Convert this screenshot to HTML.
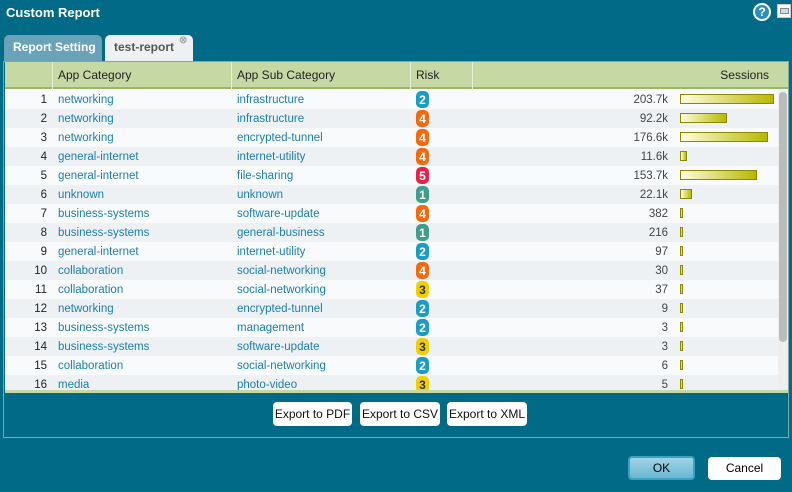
<!DOCTYPE html>
<html><head><style>
*{margin:0;padding:0;box-sizing:border-box}
body{width:792px;height:492px;background:#016a87;font-family:"Liberation Sans",sans-serif;position:relative;overflow:hidden}
.title{position:absolute;left:6px;top:5px;color:#fff;font-weight:bold;font-size:13px}
.help{position:absolute;left:753px;top:3px;width:18px;height:18px;border-radius:50%;background:#2a8fc0;border:2px solid #fff;color:#fff;font-size:12px;font-weight:bold;text-align:center;line-height:14px}
.max{position:absolute;left:777px;top:4px;width:14px;height:14px;background:#fff;border:1px solid #ccc}
.max i{position:absolute;left:2px;top:3px;width:9px;height:6px;background:#cfd8e0;border:1px solid #889}
.tab{position:absolute;top:35px;height:26px;border-radius:5px 5px 0 0;font-weight:bold;font-size:12px;line-height:24px;padding-left:9px}
.t1{left:4px;width:98px;background:#6aa3b8;color:#fff}
.t2{left:105px;width:88px;background:#eef1f3;color:#555}
.panel{position:absolute;left:3px;top:61px;width:786px;height:377px;border:1px solid #7aa;}
.grid{position:absolute;left:5px;top:62px;width:783px;height:331px;background:#f8fafc;overflow:hidden}
.hdr{position:absolute;left:0;top:0;width:783px;height:27px;background:#c6d8a4;border-bottom:2px solid #9ab86a;font-size:12px;color:#222}
.hdr div{position:absolute;top:0;height:27px;line-height:27px;border-left:1px solid #e6eed8}
.row{position:absolute;left:0;width:773px;height:19px;font-size:11.5px;line-height:21px}
.row span{position:absolute;top:0}
.n{width:42px;text-align:right;color:#222}
.c{color:#1a7fb0}
.rk{width:13px;height:17px;top:1px!important;border-radius:5px;color:#fff;font-weight:bold;text-align:center;line-height:18px;font-size:12px}
.s{width:160px;text-align:right;color:#444;left:503px}
.bar{height:10px;top:4px!important;border:1px solid #8a8a00;background:linear-gradient(90deg,#fefee0,#b8b800)}
.vl{position:absolute;top:27px;width:1px;height:304px;background:#dde2e6}
.sb{position:absolute;left:773px;top:27px;width:10px;height:304px;background:#eee}
.sb i{position:absolute;left:1px;top:3px;width:8px;height:250px;background:#bbb;border-radius:4px}
.foot{position:absolute;left:5px;top:390px;width:783px;height:3px;background:#c6d8a4}
.btn{position:absolute;top:402px;height:24px;background:#fff;border-radius:4px;font-size:12px;text-align:center;line-height:24px;color:#111}
.ok{position:absolute;left:628px;top:456px;width:67px;height:24px;border-radius:4px;background:linear-gradient(#9fd4e6,#6bb6d0);border:2px solid #3aa0c4;text-align:center;line-height:20px;font-size:12px}
.cn{position:absolute;left:708px;top:457px;width:73px;height:23px;border-radius:4px;background:#fff;text-align:center;line-height:23px;font-size:12px}
</style></head><body>
<div class="title">Custom Report</div>
<div class="help">?</div><div class="max"><i></i></div>
<div class="tab t1">Report Setting</div>
<div class="tab t2">test-report <span style="position:absolute;left:74px;top:-6px;color:#aaa;font-size:10px">⊗</span></div>
<div class="panel"></div>
<div class="grid">
<div class="hdr">
<div style="left:47px;width:179px;padding-left:5px">App Category</div>
<div style="left:226px;width:179px;padding-left:5px">App Sub Category</div>
<div style="left:405px;width:62px;padding-left:5px">Risk</div>
<div style="left:467px;width:306px;text-align:right;padding-right:9px">Sessions</div>
</div>
<div class="vl" style="left:47px"></div><div class="vl" style="left:226px"></div><div class="vl" style="left:405px"></div><div class="vl" style="left:467px"></div>
<div id="rows"></div>
<div class="sb"><i></i></div>
</div>
<div class="foot"></div>
<div class="btn" style="left:273px;width:79px">Export to PDF</div>
<div class="btn" style="left:360px;width:80px">Export to CSV</div>
<div class="btn" style="left:447px;width:80px">Export to XML</div>
<div class="ok">OK</div><div class="cn">Cancel</div>
<script>
var d=[["networking","infrastructure",2,"203.7k",94],["networking","infrastructure",4,"92.2k",47],["networking","encrypted-tunnel",4,"176.6k",88],["general-internet","internet-utility",4,"11.6k",7],["general-internet","file-sharing",5,"153.7k",77],["unknown","unknown",1,"22.1k",12],["business-systems","software-update",4,"382",3],["business-systems","general-business",1,"216",3],["general-internet","internet-utility",2,"97",3],["collaboration","social-networking",4,"30",3],["collaboration","social-networking",3,"37",3],["networking","encrypted-tunnel",2,"9",3],["business-systems","management",2,"3",3],["business-systems","software-update",3,"3",3],["collaboration","social-networking",2,"6",3],["media","photo-video",3,"5",3]];
var col={1:"#3d9e8c",2:"#1a9cc4",3:"#f0d000",4:"#f26a10",5:"#e8204a"};
var h="";d.forEach(function(r,i){h+='<div class="row" style="top:'+(28+i*19)+'px;background:'+(i%2?'#eef1f4':'#f8fafc')+'"><span class="n">'+(i+1)+'</span><span class="c" style="left:53px">'+r[0]+'</span><span class="c" style="left:232px">'+r[1]+'</span><span class="rk" style="left:411px;background:'+col[r[2]]+';color:'+(r[2]==3?'#333':'#fff')+'">'+r[2]+'</span><span class="s">'+r[3]+'</span><span class="bar" style="left:675px;width:'+r[4]+'px"></span></div>'});
document.getElementById("rows").innerHTML=h;
</script>
</body></html>
